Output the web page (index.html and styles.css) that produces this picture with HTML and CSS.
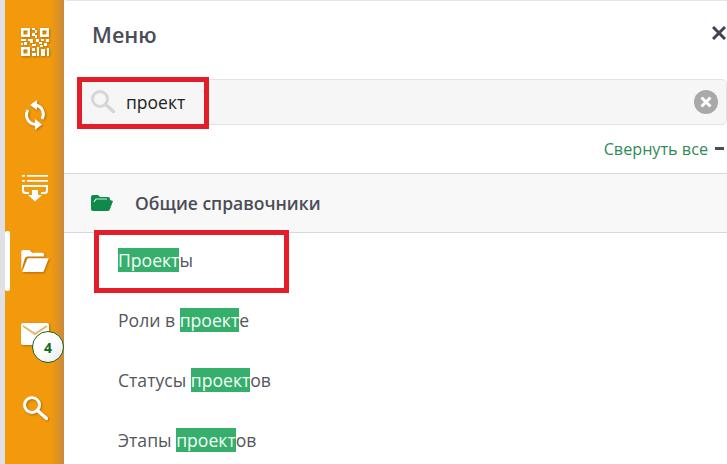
FILE: index.html
```html
<!DOCTYPE html>
<html lang="ru">
<head>
<meta charset="utf-8">
<title>Меню</title>
<link rel="stylesheet" href="styles.css">
</head>
<body>
<div class="app">
  <nav class="rail">
    <div class="rail-item rail-qr">
      <svg width="30" height="30" viewBox="0 0 30 30" fill="#fff"><path fill-rule="evenodd" d="M1 1h9v9H1zM3.500 3.500v4h4v-4zM20 1h9v9h-9zM22.500 3.500v4h4v-4zM1 20h9v9H1zM3.500 22.500v4h4v-4z"/><path d="M12 1h3v2h-3zM15 3h2v3h-2zM12 6h3v3h-3zM15 8h2v3h-2zM1 12h5v2H1zM8 12h5v2H8zM4 15h3v3H4zM1 16h2v2H1zM10 14h3v2h-3zM12 17h4v2h-4zM16 12h3v3h-3zM21 12h3v2h-3zM26 12h3v3h-3zM19 15h3v2h-3zM24 16h3v3h-3zM20 18h3v2h-3zM12 21h3v3h-3zM17 20h2v9h-2zM12 26h4v3h-4zM21 22h4v7h-4zM27 21h2v8h-2z"/></svg>
    </div>
    <div class="rail-item rail-sync">
      <svg width="26" height="30" viewBox="0 0 26 30" fill="none" stroke="#fff" stroke-width="3"><path d="M14 5A9.500 9.500 0 0 1 20 19"/><path d="M6 10A9.500 9.500 0 0 0 13 24.500"/><path d="M15 0v10l-7-5z" fill="#fff" stroke="none"/><path d="M13 19v11l7-5.500z" fill="#fff" stroke="none"/></svg>
    </div>
    <div class="rail-item rail-import">
      <svg class="icon-thin" width="26" height="28" viewBox="0 0 26 28" fill="#fff"><path d="M0 1h3v1.800H0zM5 1h21v1.800H5zM0 6h3v1.800H0zM5 6h21v1.800H5zM0 11h26v2H0z"/><path d="M0 12h2v4q0 2 2 2h3v2H3q-3 0-3-3zM26 12h-2v4q0 2-2 2h-3v2h4q3 0 3-3z"/><path d="M10 16h6v5h4l-7 6.500L6 21h4z"/></svg>
    </div>
    <div class="rail-item rail-folder">
      <span class="rail-marker"></span>
      <svg width="30" height="22" viewBox="0 0 30 24" fill="#fff"><path d="M0 22V2q0-2 2-2h7l3 3h11q2 0 2 2v2H7q-2 0-3 2z"/><path d="M7 9h23l-5 13q-.5 2-2 2H1z"/></svg>
    </div>
    <div class="rail-item rail-mail">
      <svg width="28" height="22" viewBox="0 0 28 22"><path d="M2 0h24q2 0 2 2v18q0 2-2 2H2q-2 0-2-2V2q0-2 2-2z" fill="#fff"/><path d="M2 3l12 8 12-8" fill="none" stroke="#e7b56b" stroke-width="2"/></svg>
      <span class="badge">4</span>
    </div>
    <div class="rail-item rail-search">
      <svg width="26" height="26" viewBox="0 0 26 26" fill="none" stroke="#fff"><circle cx="10" cy="10" r="7.500" stroke-width="3"/><path d="M15.500 15.500l9 8" stroke-width="3.500" stroke-linecap="round"/></svg>
    </div>
  </nav>
  <main class="panel">
    <header class="panel-head">
      <h1 class="panel-title">Меню</h1>
      <svg class="close-icon" width="14" height="14" viewBox="0 0 14 14" stroke="#3f4450" stroke-width="3"><path d="M1 1l12 12M13 1L1 13"/></svg>
    </header>
    <div class="search">
      <svg width="28" height="28" viewBox="0 0 28 28" fill="none" stroke="#d6d6d6"><circle cx="11" cy="11" r="7.500" stroke-width="3"/><path d="M16.500 16.500l8 7" stroke-width="3.500" stroke-linecap="round"/></svg>
      <span class="search-text">проект</span>
      <span class="search-clear"><svg width="12" height="12" viewBox="0 0 12 12" stroke="#fff" stroke-width="3"><path d="M1.500 1.500l9 9M10.500 1.500l-9 9"/></svg></span>
    </div>
    <div class="collapse"><span>Свернуть все</span><i class="collapse-dash"></i></div>
    <section class="group">
      <svg width="22" height="16" viewBox="0 0 22 16"><path d="M0 14V2q0-2 2-2h5l2 2h8q2 0 2 2v1l3 1-3 8q-.5 2-2 2H2q-2 0-2-2z" fill="#0f8a4a"/><path d="M3 7l2-3h11" fill="none" stroke="#cdeedb" stroke-width="1.200"/></svg>
      <span class="group-title">Общие справочники</span>
    </section>
    <ul class="items">
      <li class="item"><mark>Проект</mark>ы</li>
      <li class="item">Роли в <mark>проект</mark>е</li>
      <li class="item">Статусы <mark>проект</mark>ов</li>
      <li class="item">Этапы <mark>проект</mark>ов</li>
    </ul>
    <div class="callout callout-search"></div>
    <div class="callout callout-item"></div>
  </main>
</div>
</body>
</html>
```
FILE: styles.css
```css
* { box-sizing: border-box; }
html, body { margin: 0; height: 100%; overflow: hidden; }
body { background: #fff; font-family: "Open Sans", sans-serif; color: #4a4d55; }
.app { display: flex; width: 727px; height: 464px; overflow: hidden; }
.rail {
  margin-left: 5px; flex: none; width: 59px;
  display: flex; flex-direction: column; align-items: center;
  background: linear-gradient(to right, #f39a0c 0, #f39a0c 78%, #c98a3a 100%);
  box-shadow: -5px 0 0 #dfe1e6;
}
.rail-item { position: relative; display: flex; justify-content: center; align-items: center; width: 100%; }
.rail-item svg { filter: drop-shadow(1px 1px 1px rgba(120, 70, 0, .55)); }
.rail-item .icon-thin { filter: drop-shadow(.5px .5px .5px rgba(120, 70, 0, .4)); }
.rail-qr { margin-top: 27px; height: 30px; }
.rail-sync { margin-top: 43px; height: 30px; }
.rail-import { margin-top: 44px; height: 28px; }
.rail-folder { margin-top: 48px; height: 22px; }
.rail-mail { margin-top: 51px; height: 22px; }
.rail-search { margin-top: 50px; height: 26px; }
.rail-marker {
  position: absolute; left: 0; top: -19px; width: 5px; height: 60px;
  background: #fff; border-radius: 2px;
}
.badge {
  position: absolute; left: 27px; top: 8px; width: 32px; height: 32px;
  display: flex; align-items: center; justify-content: center;
  border-radius: 50%; border: 1px solid #14661f;
  background: linear-gradient(135deg, #fff 50%, #e3e6ea);
  color: #0f6b1e; font-size: 14px; font-weight: 700;
}
.panel {
  position: relative; flex: 1; min-width: 0;
  border-top: 1px solid #e6e6e6; border-top-left-radius: 4px;
}
.panel-head { display: flex; align-items: center; justify-content: space-between; height: 66px; padding: 2px 1px 0 28px; margin-top: -1px; }
.panel-title { margin: 0; font-size: 21.600px; font-weight: 600; color: #4a4d57; }
.close-icon { margin-top: -2px; }
.search {
  display: flex; align-items: center; height: 46px; margin: 13px 0 0 14px;
  padding: 0 8px 0 10px; background: #f6f6f7;
  border: 1px solid #e3e3e3; border-radius: 5px;
}
.search-text { margin-left: 9px; flex: 1; font-size: 17.500px; color: #222; }
.search-clear {
  display: flex; align-items: center; justify-content: center;
  width: 24px; height: 24px; border-radius: 50%; background: #a9a9a9;
}
.collapse {
  display: flex; justify-content: flex-end; align-items: center; gap: 7px;
  height: 48px; padding-right: 3px; font-size: 16.200px; color: #2f8b57;
}
.collapse-dash { width: 9px; height: 3px; background: #4a4d55; margin-top: -1px; }
.group {
  display: flex; align-items: center; height: 60px; padding-left: 27px;
  background: #f8f8f8; border-top: 1px solid #d8d8d8; border-bottom: 1px solid #d8d8d8;
}
.group-title { margin-left: 22px; font-size: 17.500px; font-weight: 600; color: #4a4d57; }
.items { margin: -3px 0 0; padding: 0; list-style: none; }
.item { display: flex; align-items: center; white-space: pre; height: 60px; padding-left: 54px; font-size: 17.600px; color: #54565c; }
.item mark { background: #36ae6c; color: #f4fff8; line-height: 24px; }
.callout { position: absolute; border: 5px solid #e31e2a; pointer-events: none; }
.callout-search { left: 13px; top: 76px; width: 132px; height: 52px; }
.callout-item { left: 30px; top: 229px; width: 195px; height: 63px; }
```
